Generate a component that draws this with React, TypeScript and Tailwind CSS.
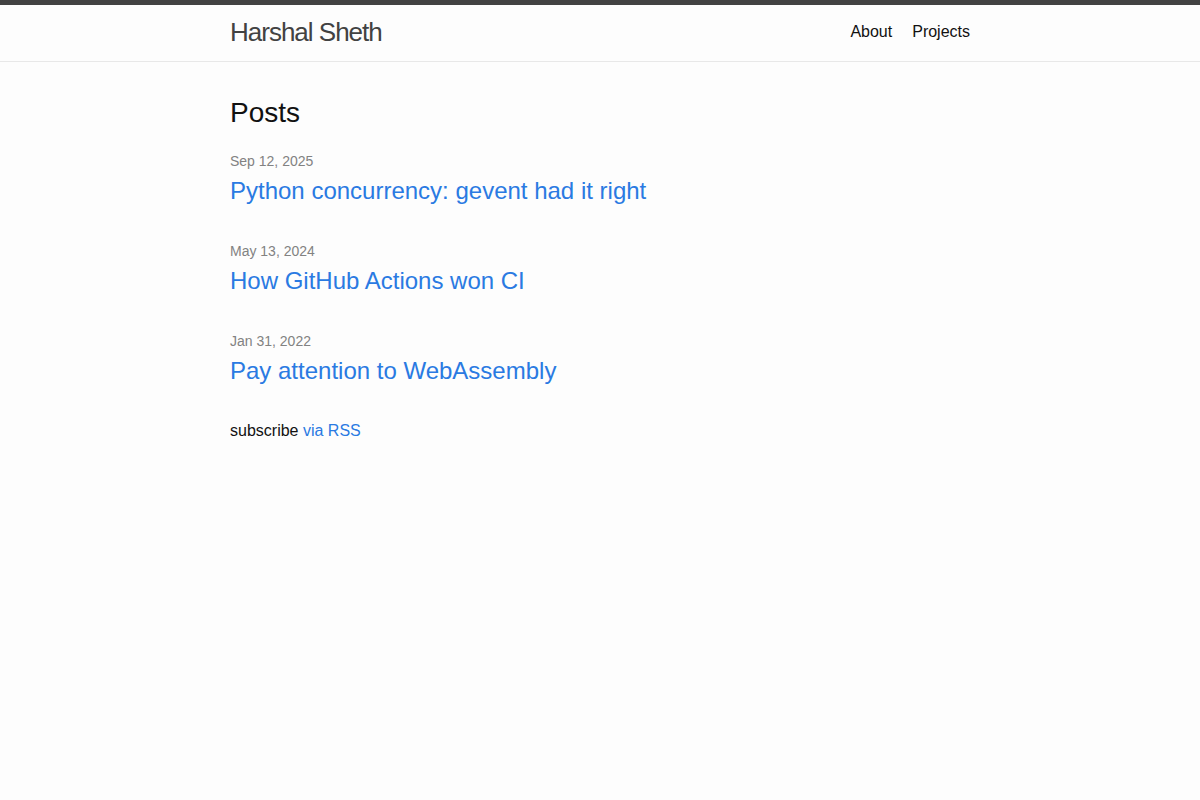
export default function App() {
  const posts = [
    { date: "Sep 12, 2025", title: "Python concurrency: gevent had it right" },
    { date: "May 13, 2024", title: "How GitHub Actions won CI" },
    { date: "Jan 31, 2022", title: "Pay attention to WebAssembly" },
  ];
  return (
    <div
      className="min-h-[800px] bg-[#fdfdfd] text-[#111111] text-[16px] leading-[1.5]"
      style={{ fontFamily: '"Liberation Sans", Arial, sans-serif' }}
    >
      <header className="border-t-[5px] border-t-[#424242] border-b border-b-[#e8e8e8] min-h-[62px]">
        <div className="w-[740px] mx-auto flex justify-between items-center">
          <a className="text-[26px] font-light leading-[54px] tracking-[-1px] text-[#424242]" href="#">
            Harshal Sheth
          </a>
          <nav className="flex gap-5 leading-[54px]">
            <a className="text-[#111111] leading-[1.5]" href="#">About</a>
            <a className="text-[#111111] leading-[1.5]" href="#">Projects</a>
          </nav>
        </div>
      </header>
      <main className="py-[30px]">
        <div className="w-[740px] mx-auto">
          <h2 className="text-[28px] leading-[42px] mb-[17px]">Posts</h2>
          <ul className="flex flex-col gap-[32px] mb-[30px]">
            {posts.map((p) => (
              <li key={p.title}>
                <div className="text-[14px] leading-[21px] text-[#828282]">{p.date}</div>
                <h3 className="mt-[1px]">
                  <a className="block text-[24px] leading-[36px] text-[#2a7ae2]" href="#">
                    {p.title}
                  </a>
                </h3>
              </li>
            ))}
          </ul>
          <p>
            subscribe <a className="text-[#2a7ae2]" href="#">via RSS</a>
          </p>
        </div>
      </main>
    </div>
  );
}
